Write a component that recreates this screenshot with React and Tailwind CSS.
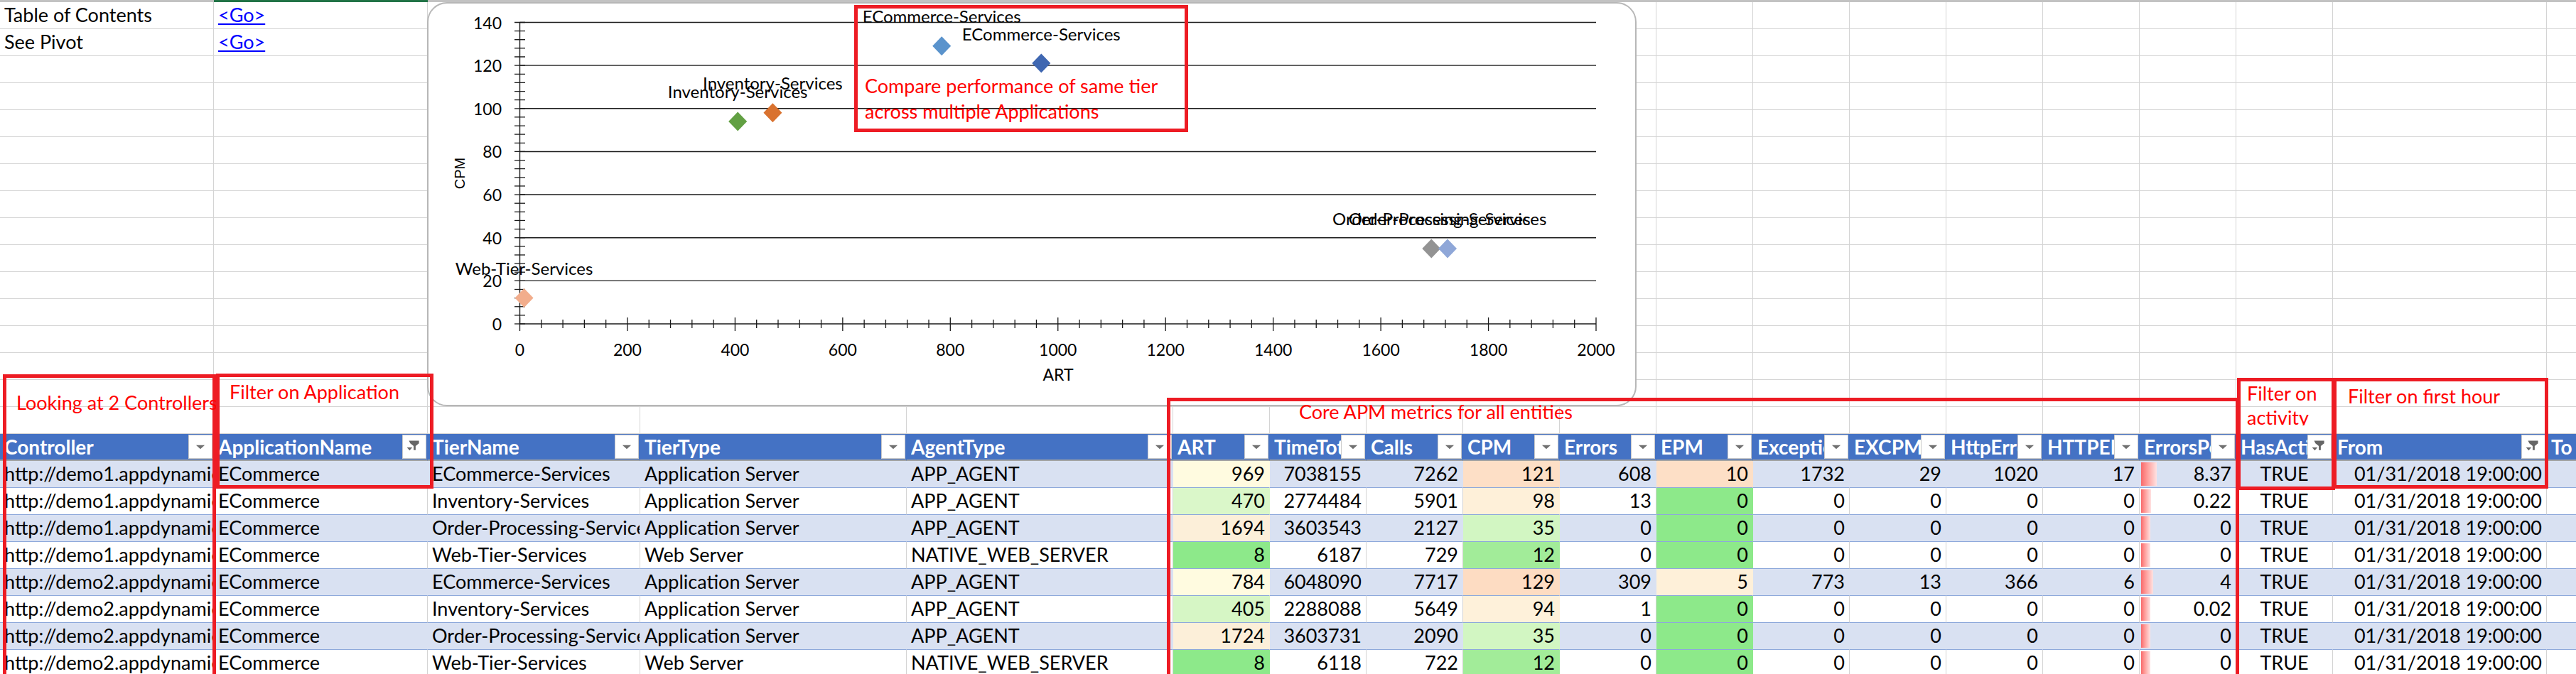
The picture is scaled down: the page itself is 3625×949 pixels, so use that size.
import React from "react";

const COLS =
  "grid grid-cols-[301px_301px_299px_375px_375px_repeat(12,136px)_301px_300px]";

const HEADERS = [
  { t: "Controller" },
  { t: "ApplicationName", f: true },
  { t: "TierName" },
  { t: "TierType" },
  { t: "AgentType" },
  { t: "ART" },
  { t: "TimeTotal" },
  { t: "Calls" },
  { t: "CPM" },
  { t: "Errors" },
  { t: "EPM" },
  { t: "Exceptions" },
  { t: "EXCPM" },
  { t: "HttpErrors" },
  { t: "HTTPEPM" },
  { t: "ErrorsPercentage" },
  { t: "HasActivity", f: true },
  { t: "From", f: true },
  { t: "To" },
];

const ROWS = [
  ["http://demo1.appdynamics.com", "ECommerce", "ECommerce-Services", "Application Server", "APP_AGENT", 969, 7038155, 7262, 121, 608, 10, 1732, 29, 1020, 17, "8.37"],
  ["http://demo1.appdynamics.com", "ECommerce", "Inventory-Services", "Application Server", "APP_AGENT", 470, 2774484, 5901, 98, 13, 0, 0, 0, 0, 0, "0.22"],
  ["http://demo1.appdynamics.com", "ECommerce", "Order-Processing-Services", "Application Server", "APP_AGENT", 1694, 3603543, 2127, 35, 0, 0, 0, 0, 0, 0, "0"],
  ["http://demo1.appdynamics.com", "ECommerce", "Web-Tier-Services", "Web Server", "NATIVE_WEB_SERVER", 8, 6187, 729, 12, 0, 0, 0, 0, 0, 0, "0"],
  ["http://demo2.appdynamics.com", "ECommerce", "ECommerce-Services", "Application Server", "APP_AGENT", 784, 6048090, 7717, 129, 309, 5, 773, 13, 366, 6, "4"],
  ["http://demo2.appdynamics.com", "ECommerce", "Inventory-Services", "Application Server", "APP_AGENT", 405, 2288088, 5649, 94, 1, 0, 0, 0, 0, 0, "0.02"],
  ["http://demo2.appdynamics.com", "ECommerce", "Order-Processing-Services", "Application Server", "APP_AGENT", 1724, 3603731, 2090, 35, 0, 0, 0, 0, 0, 0, "0"],
  ["http://demo2.appdynamics.com", "ECommerce", "Web-Tier-Services", "Web Server", "NATIVE_WEB_SERVER", 8, 6118, 722, 12, 0, 0, 0, 0, 0, 0, "0"],
];

// colour scale fills, sampled from the sheet
const ART_BG = [
  "bg-[#FFFBE0] border-r-[#FFFBE0]",
  "bg-[#DAF7C9] border-r-[#DAF7C9]",
  "bg-[#FCEFD9] border-r-[#FCEFD9]",
  "bg-[#8DE98A] border-r-[#8DE98A]",
  "bg-[#FFFBE0] border-r-[#FFFBE0]",
  "bg-[#D6F6C5] border-r-[#D6F6C5]",
  "bg-[#FCEFD9] border-r-[#FCEFD9]",
  "bg-[#8DE98A] border-r-[#8DE98A]",
];
const CPM_BG = [
  "bg-[#FDDFC6] border-r-[#FDDFC6]",
  "bg-[#FEF0D9] border-r-[#FEF0D9]",
  "bg-[#D2F6C2] border-r-[#D2F6C2]",
  "bg-[#A2EC99] border-r-[#A2EC99]",
  "bg-[#FDDCC2] border-r-[#FDDCC2]",
  "bg-[#FEF1DA] border-r-[#FEF1DA]",
  "bg-[#D2F6C2] border-r-[#D2F6C2]",
  "bg-[#A2EC99] border-r-[#A2EC99]",
];
const EPM_BG = [
  "bg-[#FDDFC6] border-r-[#FDDFC6]",
  "bg-[#8DE98A] border-r-[#8DE98A]",
  "bg-[#8DE98A] border-r-[#8DE98A]",
  "bg-[#8DE98A] border-r-[#8DE98A]",
  "bg-[#FEF0D9] border-r-[#FEF0D9]",
  "bg-[#8DE98A] border-r-[#8DE98A]",
  "bg-[#8DE98A] border-r-[#8DE98A]",
  "bg-[#8DE98A] border-r-[#8DE98A]",
];
const BAR_W = [22, 14, 13, 13, 17, 13, 13, 13];

const cellBase =
  "h-[38px] border-b border-r flex items-center overflow-hidden whitespace-nowrap";

function FilterButton({ active }) {
  return (
    <div className="shrink-0 w-[34px] h-[34px] mr-[1px] bg-white border border-[#C9C9C9] flex items-center justify-center">
      {active ? (
        <svg width="34" height="34" viewBox="0 0 34 34">
          <path d="M9 8h15v4l-5 4v6h-3v-6l-5-4z" fill="#666" />
          <path d="M6 18h8l-4 4.5z" fill="#666" />
        </svg>
      ) : (
        <svg width="34" height="34" viewBox="0 0 34 34">
          <path d="M10.5 14.5h13l-6.5 6z" fill="#707070" />
        </svg>
      )}
    </div>
  );
}

function BlankRow({ a, b }) {
  return (
    <>
      {HEADERS.map((h, j) => (
        <div
          key={j}
          className={`${cellBase} px-[6px] bg-white border-b-[#D4D4D4] border-r-[#D4D4D4]`}
        >
          {j === 0 && a}
          {j === 1 && b && <span className="text-[#0000FF] underline">{b}</span>}
        </div>
      ))}
    </>
  );
}

function HeaderRow() {
  return (
    <>
      {HEADERS.map((h, j) => (
        <div
          key={h.t}
          className={`${cellBase} bg-[#4472C4] border-r-[#4472C4] border-b-2 border-b-[#A3A3A3] pl-[6px] text-white font-bold text-[28px]`}
        >
          <span className="flex-1 min-w-0 overflow-hidden">{h.t}</span>
          {j < 18 && <FilterButton active={h.f} />}
        </div>
      ))}
    </>
  );
}

function DataRow({ row, i }) {
  const band = i % 2 === 0;
  const plain = band
    ? "bg-[#D9E1F2] border-r-[#D9E1F2]"
    : "bg-white border-r-[#D4D4D4]";
  const cells = [...row, "TRUE", "01/31/2018 19:00:00", ""];
  return (
    <>
      {cells.map((v, j) => {
        let fill = plain;
        if (j === 5) fill = ART_BG[i];
        if (j === 8) fill = CPM_BG[i];
        if (j === 10) fill = EPM_BG[i];
        const cls = `${cellBase} border-b-[#8EA9DB] ${fill}`;
        if (j < 5 || j === 18)
          return (
            <div key={j} className={`${cls} px-[6px]`}>
              {v}
            </div>
          );
        if (j === 15)
          return (
            <div key={j} className={`${cls} pl-[2px] pr-[6px]`}>
              <div
                className="h-[33px] bg-linear-to-r from-[#F8696B] to-[#FFE2E2]"
                style={{ width: BAR_W[i] }}
              />
              <span className="ml-auto">{v}</span>
            </div>
          );
        if (j === 16)
          return (
            <div key={j} className={`${cls} justify-center`}>
              {v}
            </div>
          );
        return (
          <div key={j} className={`${cls} justify-end px-[6px]`}>
            {v}
          </div>
        );
      })}
    </>
  );
}

const POINTS = [
  { x: 969, y: 121, c: "#3F67B1", l: "ECommerce-Services" },
  { x: 784, y: 129, c: "#5A93CC", l: "ECommerce-Services" },
  { x: 470, y: 98, c: "#D9722F", l: "Inventory-Services" },
  { x: 405, y: 94, c: "#62A043", l: "Inventory-Services" },
  { x: 1694, y: 35, c: "#939393", l: "Order-Processing-Services" },
  { x: 1724, y: 35, c: "#8FA7D8", l: "Order-Processing-Services" },
  { x: 8, y: 12, c: "#F2AD8C", l: "Web-Tier-Services" },
];

function Chart() {
  const px = (v) => 731.5 + v * 0.75725;
  const py = (v) => 456 - v * 3.0321;
  const yTicks = [];
  for (let v = 0; v <= 140; v += 4) yTicks.push(v);
  const xTicks = [];
  for (let v = 0; v <= 2000; v += 40) xTicks.push(v);
  const grid = [20, 40, 60, 80, 100, 120, 140];
  const yLabels = [0, 20, 40, 60, 80, 100, 120, 140];
  const xLabels = [0, 200, 400, 600, 800, 1000, 1200, 1400, 1600, 1800, 2000];

  return (
    <div className="absolute left-[601px] top-[3px] w-[1702px] h-[569px] rounded-[28px] border-2 border-[#B7B7B7] bg-white overflow-hidden">
      <svg width="1702" height="569" className="absolute -left-[2px] -top-[2px]">
        <g transform="translate(-601 -3)" fontFamily="Lato, sans-serif" fill="#000">
          {grid.map((v) => (
            <line key={v} x1={731.5} x2={2246} y1={py(v)} y2={py(v)} stroke="#1a1a1a" strokeWidth="1.4" />
          ))}
          <line x1={731.5} x2={731.5} y1={py(140)} y2={456} stroke="#1a1a1a" strokeWidth="1.4" />
          <line x1={731.5} x2={2246} y1={456} y2={456} stroke="#1a1a1a" strokeWidth="1.4" />
          {yTicks.map((v) => (
            <line key={v} x1={724} x2={739} y1={py(v)} y2={py(v)} stroke="#1a1a1a" strokeWidth="1.3" />
          ))}
          {xTicks.map((v) => (
            <line
              key={v}
              x1={px(v)}
              x2={px(v)}
              y1={v % 200 === 0 ? 447 : 450}
              y2={v % 200 === 0 ? 466 : 462}
              stroke="#1a1a1a"
              strokeWidth="1.3"
            />
          ))}
          {yLabels.map((v) => (
            <text key={v} x={706} y={py(v)} fontSize="23" textAnchor="end" dominantBaseline="central">
              {v}
            </text>
          ))}
          {xLabels.map((v) => (
            <text key={v} x={px(v)} y={492} fontSize="23" textAnchor="middle" dominantBaseline="central">
              {v}
            </text>
          ))}
          <text x={1489} y={527} fontSize="23" textAnchor="middle" dominantBaseline="central">
            ART
          </text>
          <text
            x={647}
            y={244}
            fontSize="20"
            fontFamily="Liberation Sans, Arial, sans-serif"
            textAnchor="middle"
            dominantBaseline="central"
            transform="rotate(-90 647 244)"
          >
            CPM
          </text>
          {POINTS.map((p, k) => {
            const cx = px(p.x);
            const cy = py(p.y);
            return (
              <g key={k}>
                <path d={`M${cx} ${cy - 13.5}L${cx + 13} ${cy}L${cx} ${cy + 13.5}L${cx - 13} ${cy}Z`} fill={p.c} />
                <text x={cx} y={cy - 42} fontSize="24" textAnchor="middle" dominantBaseline="central">
                  {p.l}
                </text>
              </g>
            );
          })}
        </g>
      </svg>
    </div>
  );
}

function Note({ className, inner, children }) {
  return (
    <div className={`absolute border-[5px] border-[#ED1C24] ${className}`}>
      <div className={`text-[#FF0000] whitespace-nowrap ${inner}`}>{children}</div>
    </div>
  );
}

export default function App() {
  return (
    <div className="relative w-[3625px] h-[949px] overflow-hidden bg-white text-[27px] text-black font-['Lato',sans-serif]">
      {/* column header edge, column B selected */}
      <div className={`${COLS} h-[3px]`}>
        <div className="bg-[#C2C2C2]" />
        <div className="bg-[#217346]" />
        {HEADERS.slice(2).map((h) => (
          <div key={h.t} className="bg-[#C2C2C2]" />
        ))}
      </div>

      <div className={COLS}>
        <BlankRow a="Table of Contents" b="<Go>" />
        <BlankRow a="See Pivot" b="<Go>" />
        {Array.from({ length: 14 }).map((_, k) => (
          <BlankRow key={k} />
        ))}
        <HeaderRow />
        {ROWS.map((r, i) => (
          <DataRow key={i} row={r} i={i} />
        ))}
      </div>

      <Chart />

      {/* annotation boxes */}
      <Note className="left-[1202px] top-[7px] w-[470px] h-[179px]" inner="pl-[10px] pt-[91px] leading-[36px]">
        <div>Compare performance of same tier</div>
        <div>across multiple Applications</div>
      </Note>
      <Note className="left-[4px] top-[527px] w-[300px] h-[440px]" inner="pl-[14px] pt-[16px] leading-[38px]">
        Looking at 2 Controllers
      </Note>
      <Note className="left-[304px] top-[526px] w-[306px] h-[162px]" inner="pl-[14px] pt-[2px] leading-[38px]">
        Filter on Application
      </Note>
      <Note className="left-[1642px] top-[560px] w-[1509px] h-[420px]" inner="pl-[181px] leading-[30px]">
        Core APM metrics for all entities
      </Note>
      <Note className="left-[3148px] top-[532px] w-[138px] h-[158px]" inner="pl-[9px] leading-[34px] h-[62px] overflow-hidden">
        <div>Filter on</div>
        <div>activity</div>
      </Note>
      <Note className="left-[3283px] top-[532px] w-[303px] h-[156px]" inner="pl-[16px] pt-[3px] leading-[36px]">
        Filter on first hour
      </Note>
    </div>
  );
}
